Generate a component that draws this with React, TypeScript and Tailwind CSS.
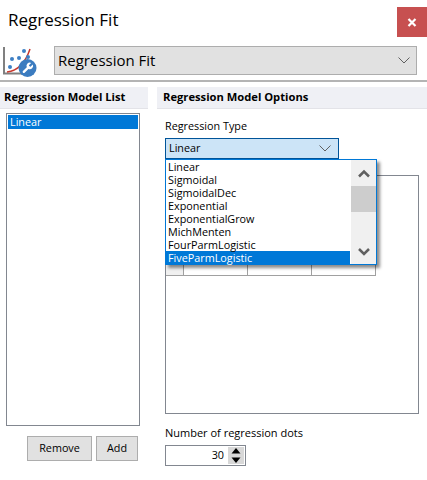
import React from "react";

const ui = "font-['Open_Sans','Noto_Sans',sans-serif]";
const items = ["Linear", "Sigmoidal", "SigmoidalDec", "Exponential", "ExponentialGrow", "MichMenten", "FourParmLogistic"];

function Chevron() {
  return (
    <svg width="12" height="7" viewBox="0 0 12 7" className="shrink-0">
      <path d="M0.500 0.500L6 6l5.500-5.500" fill="none" stroke="#606060" strokeWidth="1" />
    </svg>
  );
}

function Logo() {
  return (
    <svg width="34" height="30" viewBox="0 0 34 30" className="shrink-0">
      <path d="M1 0V26.500H22" fill="none" stroke="#808080" strokeWidth="2" />
      <path d="M4 25C13 24 22 17 27 2" fill="none" stroke="#c8382e" strokeWidth="1.500" />
      <g fill="#3d7fc4">
        <circle cx="7" cy="20" r="2" />
        <circle cx="9" cy="12" r="2" />
        <circle cx="16" cy="11" r="2" />
        <circle cx="21" cy="4" r="2" />
        <circle cx="25" cy="10" r="2" />
      </g>
      <circle cx="24.500" cy="21" r="9" fill="#3b7cc0" />
      <g transform="translate(18 14.500) scale(0.55)">
        <path
          d="M14.700 6.300a1 1 0 0 0 0 1.400l1.600 1.600a1 1 0 0 0 1.400 0l3.770-3.770a6 6 0 0 1-7.940 7.940l-6.910 6.910a2.120 2.120 0 0 1-3-3l6.910-6.910a6 6 0 0 1 7.940-7.940l-3.760 3.760z"
          fill="#ffffff"
        />
      </g>
    </svg>
  );
}

function Table() {
  const cols = ["w-[18px] bg-[#f0f0f0]", "w-[64px]", "w-[64px]", "w-[64px]"];
  return (
    <div className="flex h-[100px] w-[210px] flex-col">
      <div className="flex-1" />
      <div className="flex h-[11px] border-b border-[#a0a0a0]">
        {cols.map((c, i) => (
          <div key={i} className={`h-full border-r border-[#a0a0a0] ${c}`} />
        ))}
      </div>
    </div>
  );
}

export default function App() {
  return (
    <div className={`${ui} relative flex h-[480px] w-[427px] flex-col overflow-hidden bg-white text-[10.800px] text-black`}>
      <header className="flex h-[46px] items-start justify-between">
        <h1 className="pl-2 pt-[6px] text-[17px] leading-[28px]">Regression Fit</h1>
        <button className="mt-[7px] flex h-[30px] w-[30px] items-center justify-center bg-[#c75050]">
          <svg width="10" height="9" viewBox="0 0 10 9">
            <path d="M1.500 1l7 7M8.500 1l-7 7" stroke="#ffffff" strokeWidth="2.200" />
          </svg>
        </button>
      </header>

      <div className="flex h-[34px] items-start pl-[3px]">
        <div className="mt-[1px] w-[51px]">
          <Logo />
        </div>
        <div className="flex h-[29px] w-[363px] items-center justify-between border border-[#adadad] bg-[#e1e1e1] pl-[3px] pr-[6px] text-[15px]">
          <span>Regression Fit</span>
          <Chevron />
        </div>
      </div>
      <div className="h-[2px] bg-[#b4b4b4]" />

      <main className="flex flex-1 gap-[9px] pt-[5px]">
        <section className="flex w-[148px] flex-col">
          <h2 className="flex h-[22px] items-center border-b border-[#e3e3e8] bg-[#eff0f5] pl-1 text-[11.200px] font-bold">
            Regression Model List
          </h2>
          <div className="ml-[6px] mt-[4px] h-[313px] w-[134px] border border-[#828790] p-[1px]">
            <div className="flex h-[14px] items-center bg-[#0078d7] pl-[2px] text-white">Linear</div>
          </div>
          <div className="ml-[27px] mt-[10px] flex gap-[4px]">
            <button className="h-[25px] w-[65px] border border-[#adadad] bg-[#e1e1e1]">Remove</button>
            <button className="h-[25px] w-[42px] border border-[#adadad] bg-[#e1e1e1]">Add</button>
          </div>
        </section>

        <section className="flex flex-1 flex-col">
          <h2 className="flex h-[22px] items-center border-b border-[#e3e3e8] bg-[#eff0f5] pl-[6px] text-[11.200px] font-bold">
            Regression Model Options
          </h2>
          <div className="relative flex-1 pl-[8px]">
            <div className="mt-[9px] h-[16px] leading-[16px]">Regression Type</div>
            <div className="mt-[4px] flex h-[21px] w-[174px] items-center justify-between border border-[#005499] bg-[#cce4f7] pl-[3px] pr-[7px]">
              <span>Linear</span>
              <Chevron />
            </div>
            <div className="mt-[16px] h-[239px] w-[254px] border border-[#828790]">
              <Table />
            </div>
            <div className="mt-[12px] h-[14px] text-[11px] leading-[14px]">Number of regression dots</div>
            <div className="mt-[5px] flex h-[21px] w-[81px] items-center justify-end border border-[#828790] pr-[1px]">
              <span className="pr-[4px]">30</span>
              <div className="flex h-[17px] w-[16px] flex-col justify-between bg-[#d8d8d8] py-[1px]">
                <svg width="16" height="6" viewBox="0 0 16 6">
                  <path d="M8 0L12.500 5.500H3.500z" fill="#000000" />
                </svg>
                <svg width="16" height="6" viewBox="0 0 16 6">
                  <path d="M3.500 0.500H12.500L8 6z" fill="#000000" />
                </svg>
              </div>
            </div>

            <div className="absolute left-[8px] top-[50px] flex h-[106px] w-[212px] border border-[#0078d7] bg-white shadow-[3px_3px_3px_rgba(0,0,0,0.45)]">
              <ul className="w-[185px] pr-[1px] leading-[13px]">
                {items.map((t) => (
                  <li key={t} className="h-[13px] pl-[2px]">{t}</li>
                ))}
                <li className="h-[14px] bg-[#0078d7] pl-[2px] text-white">FiveParmLogistic</li>
              </ul>
              <div className="flex w-[25px] flex-col items-center bg-[#f0f0f0]">
                <svg width="14" height="26" viewBox="0 0 14 26" className="shrink-0">
                  <path d="M2 16.500L7 11.500l5 5" fill="none" stroke="#606060" strokeWidth="2.500" />
                </svg>
                <div className="h-[26px] w-full bg-[#cdcdcd]" />
                <div className="flex-1" />
                <svg width="14" height="26" viewBox="0 0 14 26" className="shrink-0">
                  <path d="M2 11l5 5 5-5" fill="none" stroke="#606060" strokeWidth="2.500" />
                </svg>
              </div>
            </div>
          </div>
        </section>
      </main>
    </div>
  );
}
